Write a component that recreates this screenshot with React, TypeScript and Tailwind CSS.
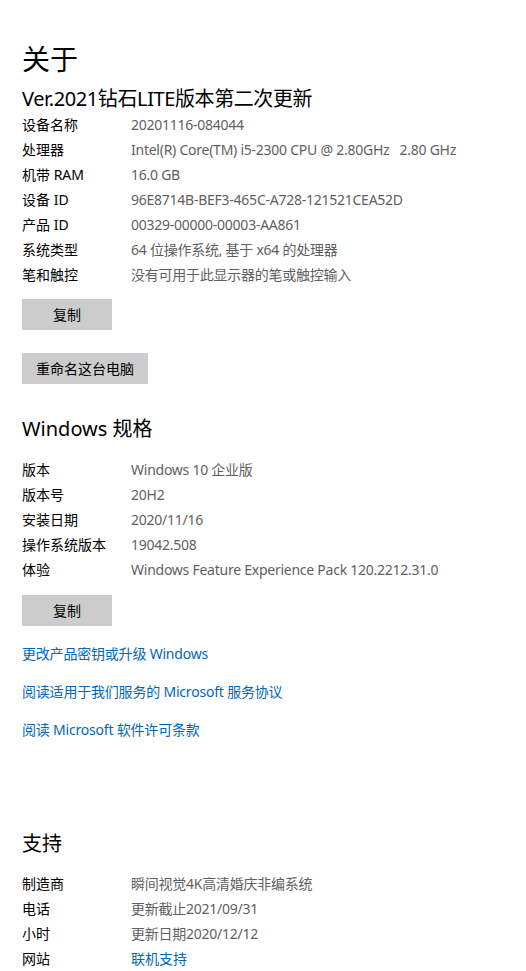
import React from "react";

const font = { fontFamily: '"Segoe UI", "Noto Sans", "Noto Sans CJK SC", sans-serif' };

type Row = { label: string; value: string; link?: boolean };

const deviceRows: Row[] = [
  { label: "设备名称", value: "20201116-084044" },
  { label: "处理器", value: "Intel(R) Core(TM) i5-2300 CPU @ 2.80GHz   2.80 GHz" },
  { label: "机带 RAM", value: "16.0 GB" },
  { label: "设备 ID", value: "96E8714B-BEF3-465C-A728-121521CEA52D" },
  { label: "产品 ID", value: "00329-00000-00003-AA861" },
  { label: "系统类型", value: "64 位操作系统, 基于 x64 的处理器" },
  { label: "笔和触控", value: "没有可用于此显示器的笔或触控输入" },
];

const winRows: Row[] = [
  { label: "版本", value: "Windows 10 企业版" },
  { label: "版本号", value: "20H2" },
  { label: "安装日期", value: "2020/11/16" },
  { label: "操作系统版本", value: "19042.508" },
  { label: "体验", value: "Windows Feature Experience Pack 120.2212.31.0" },
];

const supportRows: Row[] = [
  { label: "制造商", value: "瞬间视觉4K高清婚庆非编系统" },
  { label: "电话", value: "更新截止2021/09/31" },
  { label: "小时", value: "更新日期2020/12/12" },
  { label: "网站", value: "联机支持", link: true },
];

function InfoRows({ rows }: { rows: Row[] }) {
  return (
    <div className="flex flex-col">
      {rows.map((r) => (
        <div key={r.label} className="flex h-[25px] items-center text-[14px]">
          <span className="w-[109px] shrink-0 text-black">{r.label}</span>
          <span
            className={
              r.link
                ? "text-[#0067c0]"
                : "whitespace-pre tracking-[-0.25px] text-[#5f5f5f]"
            }
          >
            {r.value}
          </span>
        </div>
      ))}
    </div>
  );
}

function GrayButton({ children, wide }: { children: React.ReactNode; wide?: boolean }) {
  return (
    <button
      className={`h-[31px] bg-[#cccccc] text-[14px] text-black ${wide ? "w-[126px]" : "w-[90px]"}`}
    >
      {children}
    </button>
  );
}

export default function App() {
  return (
    <div className="min-h-screen w-full bg-white px-[22px] pt-[39px] pb-4" style={font}>
      <h1 className="text-[28px] leading-[40px] text-black">关于</h1>
      <h2 className="mt-[7px] text-[20px] leading-[26px] tracking-[-0.4px] text-black">
        Ver.2021钻石LITE版本第二次更新
      </h2>
      <InfoRows rows={deviceRows} />

      <div className="mt-[12px]">
        <GrayButton>复制</GrayButton>
      </div>
      <div className="mt-[23px]">
        <GrayButton wide>重命名这台电脑</GrayButton>
      </div>

      <h2 className="mt-[31px] text-[20px] leading-[28px] text-black">Windows 规格</h2>
      <div className="mt-[14px]">
        <InfoRows rows={winRows} />
      </div>
      <div className="mt-[13px]">
        <GrayButton>复制</GrayButton>
      </div>

      <div className="mt-[18px] flex flex-col gap-[18px] text-[14px] tracking-[-0.2px] text-[#0067c0]">
        <a className="leading-[20px]">更改产品密钥或升级 Windows</a>
        <a className="leading-[20px]">阅读适用于我们服务的 Microsoft 服务协议</a>
        <a className="leading-[20px]">阅读 Microsoft 软件许可条款</a>
      </div>

      <h2 className="mt-[90px] text-[20px] leading-[28px] text-black">支持</h2>
      <div className="mt-[13px]">
        <InfoRows rows={supportRows} />
      </div>
    </div>
  );
}
